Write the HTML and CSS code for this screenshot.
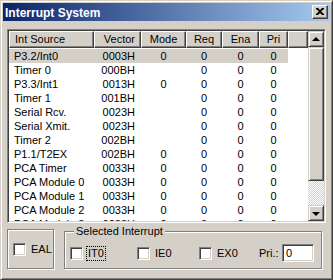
FILE: index.html
```html
<!DOCTYPE html>
<html lang="en">
<head>
<meta charset="UTF-8">
<title>Interrupt System</title>
<link rel="stylesheet" href="styles.css">
</head>
<body>

<div class="window">
  <div class="titlebar">
    <span class="title">Interrupt System</span>
    <span class="close-btn">
      <svg width="8" height="7" viewBox="0 0 8 7"><path d="M0 0h2l2 2 2-2h2v1L5 3.5 8 6v1H6L4 5 2 7H0V6l3-2.5L0 1z" fill="#000"/></svg>
    </span>
  </div>

  <div class="body">
    <div class="listview">
      <div class="list-main">
        <div class="list-header">
          <div class="hcell left">Int Source</div>
          <div class="hcell right">Vector</div>
          <div class="hcell">Mode</div>
          <div class="hcell">Req</div>
          <div class="hcell">Ena</div>
          <div class="hcell">Pri</div>
          <div class="hcell filler"></div>
        </div>
        <div class="rows">
          <div class="row selected"><span class="left">P3.2/Int0</span><span class="right">0003H</span><span>0</span><span>0</span><span>0</span><span>0</span></div>
          <div class="row"><span class="left">Timer 0</span><span class="right">000BH</span><span></span><span>0</span><span>0</span><span>0</span></div>
          <div class="row"><span class="left">P3.3/Int1</span><span class="right">0013H</span><span>0</span><span>0</span><span>0</span><span>0</span></div>
          <div class="row"><span class="left">Timer 1</span><span class="right">001BH</span><span></span><span>0</span><span>0</span><span>0</span></div>
          <div class="row"><span class="left">Serial Rcv.</span><span class="right">0023H</span><span></span><span>0</span><span>0</span><span>0</span></div>
          <div class="row"><span class="left">Serial Xmit.</span><span class="right">0023H</span><span></span><span>0</span><span>0</span><span>0</span></div>
          <div class="row"><span class="left">Timer 2</span><span class="right">002BH</span><span></span><span>0</span><span>0</span><span>0</span></div>
          <div class="row"><span class="left">P1.1/T2EX</span><span class="right">002BH</span><span>0</span><span>0</span><span>0</span><span>0</span></div>
          <div class="row"><span class="left">PCA Timer</span><span class="right">0033H</span><span>0</span><span>0</span><span>0</span><span>0</span></div>
          <div class="row"><span class="left">PCA Module 0</span><span class="right">0033H</span><span>0</span><span>0</span><span>0</span><span>0</span></div>
          <div class="row"><span class="left">PCA Module 1</span><span class="right">0033H</span><span>0</span><span>0</span><span>0</span><span>0</span></div>
          <div class="row"><span class="left">PCA Module 2</span><span class="right">0033H</span><span>0</span><span>0</span><span>0</span><span>0</span></div>
          <div class="row"><span class="left">PCA Module 3</span><span class="right">0033H</span><span>0</span><span>0</span><span>0</span><span>0</span></div>
        </div>
      </div>
      <div class="scrollbar">
        <div class="sb-btn"><span class="arrow-up"></span></div>
        <div class="sb-thumb"></div>
        <div class="sb-track"></div>
        <div class="sb-btn"><span class="arrow-down"></span></div>
      </div>
    </div>

    <div class="bottom">
      <div class="eal-box">
        <label class="check"><span class="box"></span><span class="check-text">EAL</span></label>
      </div>
      <fieldset class="group">
        <legend>Selected Interrupt</legend>
        <label class="check item-it0"><span class="box"></span><span class="check-text focus">IT0</span></label>
        <label class="check item-ie0"><span class="box"></span><span class="check-text">IE0</span></label>
        <label class="check item-ex0"><span class="box"></span><span class="check-text">EX0</span></label>
        <span class="pri-label">Pri.:</span>
        <span class="edit">0</span>
      </fieldset>
    </div>
  </div>
</div>

</body>
</html>
```

FILE: styles.css
```css
body {
  margin: 0;
  font-family: 'Liberation Sans', Arial, sans-serif;
  font-size: 11px;
  color: #000;
  background: #d4d0c8;
}

.window {
  width: 333px;
  height: 280px;
  box-sizing: border-box;
  background: #d4d0c8;
  border: 1px solid;
  border-color: #d4d0c8 #404040 #404040 #d4d0c8;
  box-shadow: inset 1px 1px #fff, inset -1px -1px #808080;
  padding: 2px;
}

.titlebar {
  height: 18px;
  background: linear-gradient(to right, #0a246a, #a6caf0);
  display: flex;
  align-items: center;
  justify-content: space-between;
  padding: 0 2px 0 2px;
}

.title {
  color: #fff;
  font-weight: bold;
  font-size: 12px;
  padding-top: 1px;
}

.close-btn {
  width: 16px;
  height: 14px;
  box-sizing: border-box;
  background: #d4d0c8;
  border: 1px solid;
  border-color: #fff #404040 #404040 #fff;
  box-shadow: inset -1px -1px #808080;
  display: flex;
  align-items: center;
  justify-content: center;
  padding: 0 1px 1px 0;
}

.body {
  padding: 8px 4px 0 4px;
}

/* List view */
.listview {
  height: 194px;
  box-sizing: border-box;
  display: flex;
  background: #fff;
  border: 1px solid;
  border-color: #808080 #fff #fff #808080;
  box-shadow: inset 1px 1px #404040, inset -1px -1px #d4d0c8;
  padding: 1px;
  overflow: hidden;
}

.list-main {
  flex: 1;
  overflow: hidden;
}

.list-header {
  display: flex;
  height: 17px;
}

.hcell {
  box-sizing: border-box;
  height: 17px;
  line-height: 14px;
  background: #d4d0c8;
  border: 1px solid;
  border-color: #fff #404040 #404040 #fff;
  box-shadow: inset -1px -1px #808080;
  text-align: center;
  white-space: nowrap;
}

.hcell:nth-child(1) { width: 85px; }
.hcell:nth-child(2) { width: 47px; }
.hcell:nth-child(3) { width: 45px; }
.hcell:nth-child(4) { width: 36px; }
.hcell:nth-child(5) { width: 37px; }
.hcell:nth-child(6) { width: 29px; }
.hcell.filler { flex: 1; }

.hcell.left { text-align: left; padding-left: 5px; }
.hcell.right { text-align: right; padding-right: 5px; }

.rows {
  padding-top: 1px;
}

.row {
  display: grid;
  grid-template-columns: 85px 47px 45px 36px 37px 29px;
  width: 279px;
  height: 14px;
  line-height: 14px;
  white-space: nowrap;
}

.row span {
  text-align: center;
}

.row .left {
  text-align: left;
  padding-left: 5px;
}

.row .right {
  text-align: right;
  padding-right: 6px;
}

.row.selected {
  background: #d4d0c8;
}

/* Scrollbar */
.scrollbar {
  width: 16px;
  display: flex;
  flex-direction: column;
}

.sb-btn,
.sb-thumb {
  box-sizing: border-box;
  background: #d4d0c8;
  border: 1px solid;
  border-color: #d4d0c8 #404040 #404040 #d4d0c8;
  box-shadow: inset 1px 1px #fff, inset -1px -1px #808080;
}

.sb-btn {
  height: 16px;
  display: flex;
  align-items: center;
  justify-content: center;
}

.sb-thumb {
  height: 134px;
}

.sb-track {
  flex: 1;
  background: repeating-conic-gradient(#fff 0 25%, #d4d0c8 0 50%) 0 0 / 2px 2px;
}

.arrow-up {
  width: 0;
  height: 0;
  border-left: 4px solid transparent;
  border-right: 4px solid transparent;
  border-bottom: 4px solid #000;
  margin-top: -1px;
}

.arrow-down {
  width: 0;
  height: 0;
  border-left: 4px solid transparent;
  border-right: 4px solid transparent;
  border-top: 4px solid #000;
  margin-top: 1px;
}

/* Bottom controls */
.bottom {
  display: flex;
  align-items: flex-start;
  margin-top: 2px;
}

.eal-box {
  width: 47px;
  height: 40px;
  box-sizing: border-box;
  margin-top: 4px;
  border: 1px solid #808080;
  box-shadow: inset 1px 1px #fff, 1px 1px #fff;
  display: flex;
  align-items: center;
  padding-left: 5px;
}

.check {
  display: flex;
  align-items: center;
}

.box {
  width: 13px;
  height: 13px;
  box-sizing: border-box;
  background: #fff;
  border: 1px solid;
  border-color: #808080 #fff #fff #808080;
  box-shadow: inset 1px 1px #404040, inset -1px -1px #d4d0c8;
  flex-shrink: 0;
}

.check-text {
  margin-left: 5px;
  line-height: 13px;
}

.check-text.focus {
  margin-left: 3px;
  padding: 0 1px;
  border: 1px dotted #000;
}

.group {
  margin: 0 0 0 10px;
  width: 258px;
  height: 44px;
  box-sizing: border-box;
  border: 1px solid #808080;
  box-shadow: inset 1px 1px #fff, 1px 1px #fff;
  padding: 0 0 0 5px;
  display: flex;
  align-items: center;
}

.group legend {
  padding: 0 2px;
  margin-left: 4px;
  line-height: 13px;
  background: #d4d0c8;
}

.item-it0 { width: 67px; }
.item-ie0 { width: 62px; }
.item-ex0 { width: 60px; }

.pri-label {
  width: 23px;
}

.edit {
  width: 32px;
  height: 18px;
  box-sizing: border-box;
  background: #fff;
  border: 1px solid;
  border-color: #808080 #fff #fff #808080;
  box-shadow: inset 1px 1px #404040, inset -1px -1px #d4d0c8;
  padding-left: 3px;
  line-height: 16px;
}
```
